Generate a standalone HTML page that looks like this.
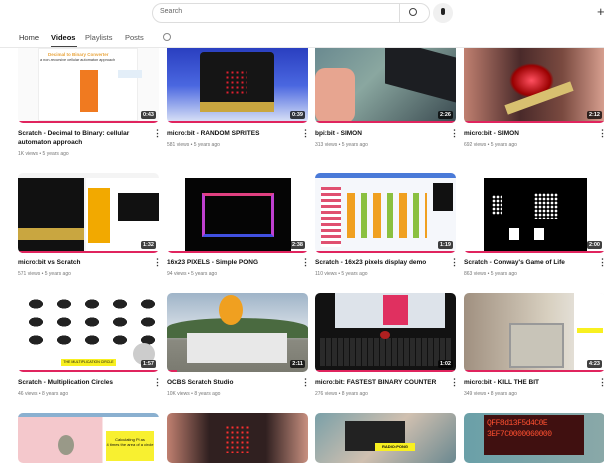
<!DOCTYPE html>
<html><head><meta charset="utf-8"><style>
*{margin:0;padding:0;box-sizing:border-box}
body{width:604px;height:454px;overflow:hidden;background:#fff;font-family:"Liberation Sans",sans-serif;position:relative;color:#0f0f0f}
.a{position:absolute}
.th{position:absolute;width:141px;border-radius:5px;overflow:hidden}
.pb{position:absolute;left:0;bottom:0;height:2px;background:#e0245e}
.du{position:absolute;right:3px;background:rgba(0,0,0,.75);color:#fff;font-size:5.5px;font-weight:bold;padding:1px 2px;border-radius:2px}
.t{position:absolute;font-size:6.5px;font-weight:bold;line-height:9px;width:125px;color:#111}
.m{position:absolute;font-size:5px;color:#777}
.k{position:absolute;font-size:9px;color:#333;font-weight:bold;line-height:9px}
</style></head><body>
<!-- header -->
<div class="a" style="left:152px;top:3px;width:278px;height:20px;border:1px solid #ddd;border-radius:10px"></div>
<div class="a" style="left:160px;top:8px;font-size:7px;color:#666">Search</div>
<div class="a" style="left:399px;top:4px;width:1px;height:18px;background:#ddd"></div>
<div class="a" style="left:409px;top:8px;width:8px;height:8px;border:1px solid #444;border-radius:50%"></div>
<div class="a" style="left:433px;top:3px;width:20px;height:20px;border-radius:50%;background:#f0f0f0"></div>
<div class="a" style="left:441px;top:8px;width:4px;height:7px;border-radius:2px;background:#222"></div>
<div class="a" style="left:597px;top:4px;font-size:13px;color:#333">+</div>
<div class="a" style="left:19px;top:33px;font-size:7.5px;color:#333">Home</div>
<div class="a" style="left:51px;top:33px;font-size:7.5px;font-weight:bold">Videos</div>
<div class="a" style="left:51px;top:46px;width:26px;height:1.5px;background:#444"></div>
<div class="a" style="left:85px;top:33px;font-size:7.5px;color:#555">Playlists</div>
<div class="a" style="left:125px;top:33px;font-size:7.5px;color:#555">Posts</div>
<div class="a" style="left:163px;top:33px;width:8px;height:8px;border:1px solid #888;border-radius:50%"></div>
<div class="a" style="left:0;top:47px;width:604px;height:1px;background:#e8e8e8"></div>

<!-- row1 top 48 bottom 123 -->
<div class="th" style="left:18px;top:48px;height:75px;background:#fafafa;border-radius:0 0 5px 5px">
 <div class="a" style="left:20px;top:0;width:100px;height:73px;background:#fff;border:1px solid #eee"></div>
 <div class="a" style="left:30px;top:4px;font-size:4.5px;color:#e8a33a;font-weight:bold">Decimal to Binary Converter</div>
 <div class="a" style="left:22px;top:10px;font-size:3.8px;color:#333">a non-recursive cellular automaton approach</div>
 <div class="a" style="left:62px;top:22px;width:18px;height:42px;background:#f07a20"></div>
 <div class="a" style="left:100px;top:22px;width:24px;height:8px;background:#e3eef8"></div>
 <div class="pb" style="width:141px"></div><div class="du" style="bottom:4px">0:43</div></div>
<div class="th" style="left:167px;top:48px;height:75px;background:linear-gradient(#2a3fc0,#4a67e0 50%,#dde5f7);border-radius:0 0 5px 5px">
 <div class="a" style="left:33px;top:4px;width:74px;height:60px;background:#151515;border-radius:4px"></div>
 <div class="a" style="left:58px;top:22px;width:22px;height:24px;background:radial-gradient(#e02030 30%,transparent 32%) 0 0/5px 5px"></div>
 <div class="a" style="left:33px;top:54px;width:74px;height:10px;background:#c9a640"></div>
 <div class="pb" style="width:141px"></div><div class="du" style="bottom:4px">0:39</div></div>
<div class="th" style="left:315px;top:48px;height:75px;background:linear-gradient(135deg,#6a8a90,#8aa7a0 40%,#3a4a50);border-radius:0 0 5px 5px">
 <div class="a" style="left:70px;top:0;width:71px;height:45px;background:#1c1e22;transform:skewY(15deg)"></div>
 <div class="a" style="left:0;top:20px;width:40px;height:55px;background:#e7a590;border-radius:10px"></div>
 <div class="pb" style="width:141px"></div><div class="du" style="bottom:4px">2:26</div></div>
<div class="th" style="left:464px;top:48px;height:75px;background:linear-gradient(90deg,#c08070,#4a2a2a 40%,#7a4a40 70%,#d8a090);border-radius:0 0 5px 5px">
 <div class="a" style="left:45px;top:15px;width:45px;height:35px;background:radial-gradient(#ff5060,#900 60%,transparent 70%)"></div>
 <div class="a" style="left:40px;top:45px;width:70px;height:10px;background:#d8c070;transform:rotate(-20deg)"></div>
 <div class="pb" style="width:141px"></div><div class="du" style="bottom:4px">2:12</div></div>

<div class="t" style="left:18px;top:129px">Scratch - Decimal to Binary: cellular automaton approach</div>
<div class="m" style="left:18px;top:151px">1K views • 5 years ago</div>
<div class="t" style="left:167px;top:129px">micro:bit - RANDOM SPRITES</div>
<div class="m" style="left:167px;top:142px">581 views • 5 years ago</div>
<div class="t" style="left:315px;top:129px">bpi:bit - SIMON</div>
<div class="m" style="left:315px;top:142px">313 views • 5 years ago</div>
<div class="t" style="left:464px;top:129px">micro:bit - SIMON</div>
<div class="m" style="left:464px;top:142px">692 views • 5 years ago</div>
<div class="k" style="left:153px;top:129px">⋮</div><div class="k" style="left:301px;top:129px">⋮</div><div class="k" style="left:450px;top:129px">⋮</div><div class="k" style="left:598px;top:129px">⋮</div>

<!-- row2 173-253 -->
<div class="th" style="left:18px;top:173px;height:80px;background:#f4f4f4">
 <div class="a" style="left:0;top:5px;width:66px;height:75px;background:#111"></div>
 <div class="a" style="left:0;top:55px;width:66px;height:12px;background:#c9a640"></div>
 <div class="a" style="left:68px;top:5px;width:73px;height:75px;background:#fff"></div>
 <div class="a" style="left:70px;top:15px;width:22px;height:55px;background:#f2a900"></div>
 <div class="a" style="left:100px;top:20px;width:41px;height:28px;background:#111"></div>
 <div class="pb" style="width:141px"></div><div class="du" style="bottom:4px">1:32</div></div>
<div class="th" style="left:167px;top:173px;height:80px;background:#fff">
 <div class="a" style="left:18px;top:5px;width:106px;height:73px;background:#050505"></div>
 <div class="a" style="left:35px;top:20px;width:72px;height:44px;border:3px solid #c040d0;border-top-color:#e04080;border-bottom-color:#4050e0"></div>
 <div class="pb" style="width:141px"></div><div class="du" style="bottom:4px">2:38</div></div>
<div class="th" style="left:315px;top:173px;height:80px;background:#f5f7fb">
 <div class="a" style="left:0;top:0;width:141px;height:5px;background:#4a7ad8"></div>
 <div class="a" style="left:6px;top:14px;width:20px;height:60px;background:repeating-linear-gradient(#e05070 0 3px,#fff 3px 6px)"></div>
 <div class="a" style="left:32px;top:20px;width:80px;height:45px;background:repeating-linear-gradient(90deg,#f0a020 0 8px,transparent 8px 14px,#8ac040 14px 20px,transparent 20px 26px)"></div>
 <div class="a" style="left:118px;top:10px;width:20px;height:28px;background:#111"></div>
 <div class="pb" style="width:141px"></div><div class="du" style="bottom:4px">1:19</div></div>
<div class="th" style="left:464px;top:173px;height:80px;background:#fff">
 <div class="a" style="left:20px;top:5px;width:103px;height:73px;background:#000"></div>
 <div class="a" style="left:70px;top:20px;width:24px;height:26px;background:radial-gradient(circle,#fff 45%,transparent 50%) 0 0/4px 4px"></div>
 <div class="a" style="left:28px;top:22px;width:10px;height:20px;background:radial-gradient(circle,#fff 45%,transparent 50%) 0 0/4px 4px"></div>
 <div class="a" style="left:45px;top:55px;width:10px;height:12px;background:#fff"></div>
 <div class="a" style="left:70px;top:55px;width:10px;height:12px;background:#fff"></div>
 <div class="pb" style="width:141px"></div><div class="du" style="bottom:4px">2:00</div></div>

<div class="t" style="left:18px;top:258px">micro:bit vs Scratch</div>
<div class="m" style="left:18px;top:271px">571 views • 5 years ago</div>
<div class="t" style="left:167px;top:258px">16x23 PIXELS - Simple PONG</div>
<div class="m" style="left:167px;top:271px">94 views • 5 years ago</div>
<div class="t" style="left:315px;top:258px">Scratch - 16x23 pixels display demo</div>
<div class="m" style="left:315px;top:271px">110 views • 5 years ago</div>
<div class="t" style="left:464px;top:258px">Scratch - Conway's Game of Life</div>
<div class="m" style="left:464px;top:271px">863 views • 5 years ago</div>
<div class="k" style="left:153px;top:258px">⋮</div><div class="k" style="left:301px;top:258px">⋮</div><div class="k" style="left:450px;top:258px">⋮</div><div class="k" style="left:598px;top:258px">⋮</div>

<!-- row3 293-372 -->
<div class="th" style="left:18px;top:293px;height:79px;background:#fff">
 <div class="a" style="left:4px;top:2px;width:135px;height:55px;background:radial-gradient(#222 35%,transparent 36%) 0 0/28px 18px"></div>
 <div class="a" style="left:43px;top:66px;width:55px;height:7px;background:#f8f020;font-size:3.5px;text-align:center;line-height:7px">THE MULTIPLICATION CIRCLE</div>
 <div class="a" style="left:115px;top:50px;width:22px;height:22px;border-radius:50%;background:#ccc"></div>
 <div class="pb" style="width:141px"></div><div class="du" style="bottom:4px">1:57</div></div>
<div class="th" style="left:167px;top:293px;height:79px;background:linear-gradient(#9fb4c8,#d5dde5 45%,#8a8a80 60%,#7a7a70)">
 <div class="a" style="left:0;top:25px;width:141px;height:20px;background:#4a6a40;border-radius:50% 50% 0 0"></div>
 <div class="a" style="left:20px;top:40px;width:100px;height:30px;background:#e8e8e8"></div>
 <div class="a" style="left:52px;top:2px;width:24px;height:30px;background:#f0a020;border-radius:50%"></div>
 <div class="pb" style="width:10px"></div><div class="du" style="bottom:4px">2:11</div></div>
<div class="th" style="left:315px;top:293px;height:79px;background:#121212">
 <div class="a" style="left:20px;top:0;width:110px;height:35px;background:#dde3ea"></div>
 <div class="a" style="left:68px;top:2px;width:25px;height:30px;background:#e03060"></div>
 <div class="a" style="left:5px;top:45px;width:131px;height:28px;background:repeating-linear-gradient(90deg,#2a2a2a 0 5px,#111 5px 6px)"></div>
 <div class="a" style="left:65px;top:38px;width:10px;height:8px;background:#b02020;border-radius:50%"></div>
 <div class="pb" style="width:141px"></div><div class="du" style="bottom:4px">1:02</div></div>
<div class="th" style="left:464px;top:293px;height:79px;background:linear-gradient(90deg,#a09080,#d8d0c0 60%,#f0f0f0)">
 <div class="a" style="left:45px;top:30px;width:55px;height:45px;background:#c8c4b8;border:2px solid #999"></div>
 <div class="a" style="left:110px;top:0;width:31px;height:79px;background:#fff"></div>
 <div class="a" style="left:113px;top:35px;width:26px;height:5px;background:#f8f020"></div>
 <div class="pb" style="width:141px"></div><div class="du" style="bottom:4px">4:23</div></div>

<div class="t" style="left:18px;top:378px">Scratch - Multiplication Circles</div>
<div class="m" style="left:18px;top:391px">46 views • 8 years ago</div>
<div class="t" style="left:167px;top:378px">OCBS Scratch Studio</div>
<div class="m" style="left:167px;top:391px">10K views • 8 years ago</div>
<div class="t" style="left:315px;top:378px">micro:bit: FASTEST BINARY COUNTER</div>
<div class="m" style="left:315px;top:391px">276 views • 8 years ago</div>
<div class="t" style="left:464px;top:378px">micro:bit - KILL THE BIT</div>
<div class="m" style="left:464px;top:391px">349 views • 8 years ago</div>
<div class="k" style="left:153px;top:378px">⋮</div><div class="k" style="left:301px;top:378px">⋮</div><div class="k" style="left:450px;top:378px">⋮</div><div class="k" style="left:598px;top:378px">⋮</div>

<!-- row4 413 -->
<div class="th" style="left:18px;top:413px;height:50px;background:linear-gradient(90deg,#f4c8cc 60%,#fff 60%)">
 <div class="a" style="left:0;top:0;width:141px;height:4px;background:#8ab0d0"></div>
 <div class="a" style="left:88px;top:18px;width:48px;height:30px;background:#f8f030;font-size:4px;text-align:center;padding-top:6px">Calculating Pi as<br>4 times the area of a circle</div>
 <div class="a" style="left:40px;top:22px;width:16px;height:20px;border-radius:50%;background:#998"></div></div>
<div class="th" style="left:167px;top:413px;height:50px;background:linear-gradient(90deg,#c08070,#302020 30%,#302020 70%,#c89080)">
 <div class="a" style="left:58px;top:12px;width:24px;height:28px;background:radial-gradient(#ff3030 30%,transparent 32%) 0 0/5px 5px"></div></div>
<div class="th" style="left:315px;top:413px;height:50px;background:linear-gradient(135deg,#7aa0a8,#d0c0b0 50%,#6a8890)">
 <div class="a" style="left:30px;top:8px;width:60px;height:30px;background:#222"></div>
 <div class="a" style="left:60px;top:30px;width:40px;height:8px;background:#f8f020;font-size:4px;font-weight:bold;text-align:center;line-height:8px">RADIO:PONG</div></div>
<div class="th" style="left:464px;top:413px;height:50px;background:linear-gradient(90deg,#6aa0a8,#8aa8a8)">
 <div class="a" style="left:20px;top:2px;width:100px;height:40px;background:#401010"></div>
 <div class="a" style="left:23px;top:5px;font-size:8px;font-family:'Liberation Mono',monospace;color:#ff5030;line-height:11px;letter-spacing:-.5px">QFF8d13F5d4C0E<br>3EF7C0000060000</div></div>
</body></html>
